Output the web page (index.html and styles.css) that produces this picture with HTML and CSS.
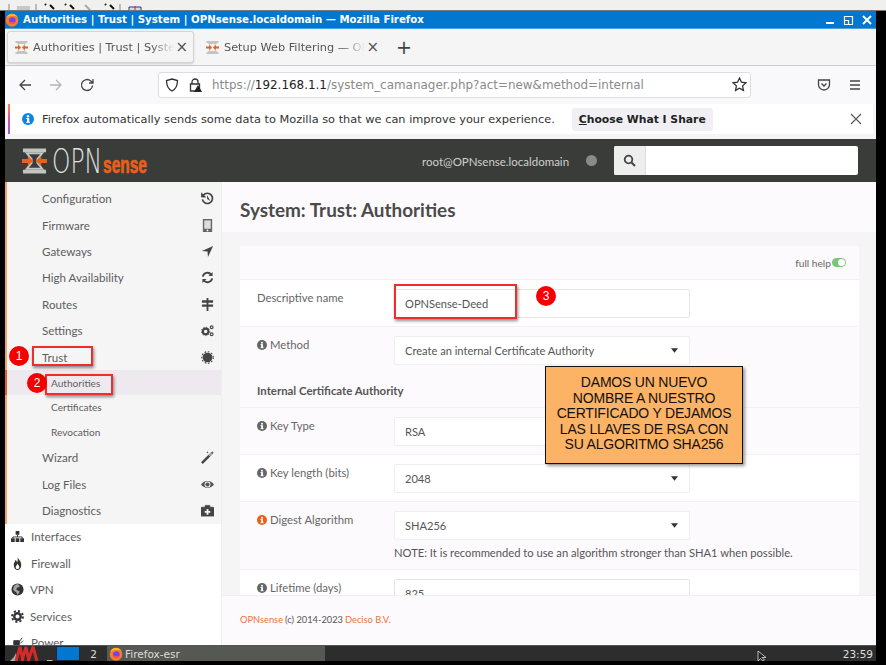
FILE: index.html
```html
<!DOCTYPE html>
<html lang="en">
<head>
    <meta charset="UTF-8">
    <meta name="viewport" content="width=device-width, initial-scale=1.0">
    <title>Authorities | Trust | System | OPNsense.localdomain</title>
    <link rel="stylesheet" href="styles.css">
</head>
<body>
    <svg class="defs" width="0" height="0">
        <symbol id="opn-mark" viewBox="0 0 26 26">
            <path d="M1 0h24v4H1zM1 22h24v4H1z" fill="#c4c4c4"/>
            <path d="M5 5h16l-5 6v4l5 6H5l5-6v-4z" fill="none" stroke="#c4c4c4" stroke-width="2"/>
            <path d="M0 11h6V8l6 5-6 5v-3H0zM26 11h-6V8l-6 5 6 5v-3h6z" fill="#e8611a"/>
        </symbol>
        <symbol id="firefox" viewBox="0 0 16 16">
            <circle cx="8" cy="8.4" r="7.2" fill="#ff7a1f"/>
            <path d="M1.2 6C2 2.6 5 .8 8 .8c3.4 0 6 2 7 5-1.5-2-3.500-2.600-5.500-2.200C6 3.200 3 4 1.200 6z" fill="#ffb61e"/>
            <circle cx="8.4" cy="8.6" r="3.8" fill="#7a3ff0"/>
            <path d="M4.6 9c.6 2.400 2.400 3.400 4.200 3.200 1.500-.2 2.800-1.200 3.200-2.800-1.600 1.400-5 1.600-7.400-.4z" fill="#ff4f5e"/>
        </symbol>
        <symbol id="info" viewBox="0 0 12 12">
            <circle cx="6" cy="6" r="6" fill="currentColor"/>
            <rect x="5" y="5" width="2.2" height="4.4" fill="#fff"/>
            <rect x="4.2" y="8.8" width="3.8" height="1" fill="#fff"/>
            <rect x="4.2" y="5" width="2" height=".9" fill="#fff"/>
            <circle cx="6" cy="3.2" r="1.2" fill="#fff"/>
        </symbol>
        <symbol id="caret" viewBox="0 0 8 5">
            <path d="M0 0h8L4 5z" fill="#333"/>
        </symbol>
    </svg>

    <div class="desktop-bar">
        <svg width="145" height="11" viewBox="0 0 145 11">
            <path d="M9 4v7M36 4v7M120 4v7" stroke="#888"/>
            <path d="M17 6h13v5H17z" fill="#c8c8c8"/>
            <path d="M45 4l1 1M50 5l4 4M65 4l1 1M70 5l4 4M105 4l1 1M110 5l4 4" stroke="#111" stroke-width="2"/>
            <path d="M85 5l5 5" stroke="#aaa" stroke-width="2"/>
            <path d="M129 7h12v4h-12z" fill="#d8d8f0" stroke="#2a3a8a"/>
            <path d="M135 6v5" stroke="#c22"/>
        </svg>
    </div>

    <div class="window">
        <div class="titlebar">
            <svg class="title-icon"><use href="#firefox"/></svg>
            <span class="title-text">Authorities | Trust | System | OPNsense.localdomain — Mozilla Firefox</span>
            <svg class="win-btns" width="46" height="12" viewBox="0 0 46 12">
                <path d="M0 8h8v2H0z" fill="#fff"/>
                <path d="M18.5 2.500h8v8h-8zM18.500 6.500h4v4" fill="none" stroke="#fff" stroke-width="1.200"/>
                <path d="M37 2l8 8M45 2l-8 8" stroke="#fff" stroke-width="2"/>
            </svg>
        </div>

        <div class="tabbar">
            <div class="tab tab-active">
                <svg class="tab-icon"><use href="#opn-mark"/></svg>
                <span class="tab-label">Authorities | Trust | System</span>
                <span class="tab-close">×</span>
            </div>
            <div class="tab">
                <svg class="tab-icon"><use href="#opn-mark"/></svg>
                <span class="tab-label">Setup Web Filtering — OPN</span>
                <span class="tab-close">×</span>
            </div>
            <span class="tab-new">+</span>
        </div>

        <div class="navbar">
            <svg class="nav-icon" viewBox="0 0 14 14"><path d="M13 7H2M7 2L2 7l5 5" fill="none" stroke="#444" stroke-width="1.3"/></svg>
            <svg class="nav-icon" viewBox="0 0 14 14"><path d="M1 7h11M7 2l5 5-5 5" fill="none" stroke="#b5b5b5" stroke-width="1.3"/></svg>
            <svg class="nav-icon" viewBox="0 0 14 14"><path d="M12.5 7.500A5.500 5.500 0 1 1 10.800 3L13 4.800M13 1v4H9" fill="none" stroke="#444" stroke-width="1.3"/></svg>
            <div class="urlbar">
                <svg class="url-icon" viewBox="0 0 14 14"><path d="M7 1l5.500 1.500c0 5-1.500 8.500-5.500 10.500C3 11 1.500 7.500 1.500 2.500z" fill="none" stroke="#333" stroke-width="1.3"/></svg>
                <svg class="url-icon" viewBox="0 0 14 14"><path d="M4 6V4a3 3 0 0 1 6 0v2M2.500 6h9v7h-9z" fill="none" stroke="#333" stroke-width="1.3"/><path d="M10 7l4 7H6z" fill="#222"/></svg>
                <span class="url-text">https://<b>192.168.1.1</b>/system_camanager.php?act=new&amp;method=internal</span>
                <svg class="url-star" viewBox="0 0 14 14"><path d="M7 1l1.800 3.900 4.200.5-3.100 2.900.8 4.200L7 10.400l-3.700 2.100.8-4.200L1 5.400l4.200-.5z" fill="none" stroke="#333" stroke-width="1.2"/></svg>
            </div>
            <svg class="nav-icon nav-pocket" viewBox="0 0 14 14"><path d="M1.500 2h11v4.500a5.500 5.500 0 0 1-11 0z" fill="none" stroke="#444" stroke-width="1.3"/><path d="M4.500 5.500L7 8l2.500-2.500" fill="none" stroke="#444" stroke-width="1.3"/></svg>
            <svg class="nav-icon nav-menu" viewBox="0 0 14 14"><path d="M2 3h10M2 7h10M2 11h10" stroke="#444" stroke-width="1.3"/></svg>
        </div>

        <div class="notice">
            <svg class="notice-icon"><use href="#info"/></svg>
            <span class="notice-text">Firefox automatically sends some data to Mozilla so that we can improve your experience.</span>
            <button class="notice-btn"><u>C</u>hoose What I Share</button>
            <svg class="notice-close" viewBox="0 0 12 12"><path d="M1 1l10 10M11 1L1 11" stroke="#555" stroke-width="1.1"/></svg>
        </div>

        <header class="opn-header">
            <svg class="opn-logo" width="130" height="28" viewBox="0 0 130 28">
                <use href="#opn-mark" x="0" y="1" width="25" height="26"/>
                <text x="30" y="26" class="logo-opn" textLength="50" lengthAdjust="spacingAndGlyphs">OPN</text>
                <text x="81" y="26" class="logo-sense" textLength="44" lengthAdjust="spacingAndGlyphs">sense</text>
            </svg>
            <span class="opn-user">root@OPNsense.localdomain</span>
            <span class="opn-dot"></span>
            <div class="opn-search">
                <span class="search-addon">
                    <svg width="13" height="13" viewBox="0 0 13 13"><circle cx="5.5" cy="5.5" r="3.8" fill="none" stroke="#444" stroke-width="1.8"/><path d="M8.500 8.500l3.500 3.500" stroke="#444" stroke-width="2"/></svg>
                </span>
            </div>
        </header>

        <div class="main">
            <nav class="sidebar">
                <div class="submenu">
                    <a class="item">Configuration
                        <svg class="item-icon" viewBox="0 0 14 14"><path d="M2.500 3.500A5.500 5.500 0 1 1 1.500 8" fill="none" stroke="#444" stroke-width="1.8"/><path d="M.5 1v4.500H5zM7 4v3.500l2.500 1.500" fill="#444" stroke="#444" stroke-width=".8"/></svg></a>
                    <a class="item">Firmware
                        <svg class="item-icon" viewBox="0 0 14 14"><path d="M2 0h10v14H2z" fill="#666"/><path d="M3.500 1.500h7v9h-7z" fill="#ddd"/><circle cx="7" cy="12.3" r=".9" fill="#fff"/></svg></a>
                    <a class="item">Gateways
                        <svg class="item-icon" viewBox="0 0 14 14"><path d="M13 1L1 6.500l6 .5.500 6z" fill="#444"/></svg></a>
                    <a class="item">High Availability
                        <svg class="item-icon" viewBox="0 0 14 14"><path d="M2 6a5 5 0 0 1 9-2M12 8a5 5 0 0 1-9 2" fill="none" stroke="#444" stroke-width="2"/><path d="M12.500 1v4.500H8zM1.500 13V8.500H6z" fill="#444"/></svg></a>
                    <a class="item">Routes
                        <svg class="item-icon" viewBox="0 0 14 14"><path d="M1 2.500h12v2.500H1zM1 7h12v2.500H1zM6 0h2v14H6z" fill="#444"/></svg></a>
                    <a class="item">Settings
                        <svg class="item-icon" viewBox="0 0 14 14"><circle cx="5" cy="8" r="3" fill="none" stroke="#444" stroke-width="2.2"/><circle cx="5" cy="8" r="4.500" fill="none" stroke="#444" stroke-dasharray="1.500 1.500"/><circle cx="11.500" cy="3.500" r="1.500" fill="none" stroke="#444" stroke-width="1.2"/><circle cx="11.500" cy="11" r="1.500" fill="none" stroke="#444" stroke-width="1.2"/></svg></a>
                    <a class="item">Trust
                        <svg class="item-icon" viewBox="0 0 14 14"><circle cx="7" cy="7" r="5.2" fill="#444"/><circle cx="7" cy="7" r="6.2" fill="none" stroke="#444" stroke-width="1.2" stroke-dasharray="1.800 1.800"/></svg></a>
                    <a class="subitem subitem-active">Authorities</a>
                    <a class="subitem">Certificates</a>
                    <a class="subitem">Revocation</a>
                    <a class="item">Wizard
                        <svg class="item-icon" viewBox="0 0 14 14"><path d="M1 13l8-8" stroke="#444" stroke-width="2.6"/><path d="M9 5l2-2" stroke="#999" stroke-width="2.6"/><path d="M12 0l.6 1.400L14 2l-1.400.6L12 4l-.6-1.400L10 2l1.400-.6zM7 0l.4 1 1 .4-1 .4-.4 1-.4-1-1-.4 1-.4z" fill="#555"/></svg></a>
                    <a class="item">Log Files
                        <svg class="item-icon" viewBox="0 0 14 14"><path d="M0 7c3.500-5 10.500-5 14 0-3.500 5-10.500 5-14 0z" fill="#555"/><circle cx="7" cy="7" r="3.2" fill="#f5f5f5"/><circle cx="7" cy="7" r="2.2" fill="#555"/></svg></a>
                    <a class="item">Diagnostics
                        <svg class="item-icon" viewBox="0 0 14 14"><path d="M1 3.500h12a1 1 0 0 1 1 1V13H0V4.500a1 1 0 0 1 1-1zM4.500 3.500V1.500h5v2" fill="#444" stroke="#444" stroke-width=".8"/><path d="M6 5.500h2V7.500h2v2H8v2H6v-2H4v-2h2z" fill="#f5f5f5"/></svg></a>
                </div>
                <a class="top-item">
                    <svg class="top-icon" viewBox="0 0 14 14"><path d="M5 1h4v4H5zM0 9h4v4H0zM5 9h4v4H5zM10 9h4v4h-4z" fill="#333"/><path d="M7 5v2.500M2 9V7.500h10V9" fill="none" stroke="#333"/></svg>
                    Interfaces</a>
                <a class="top-item">
                    <svg class="top-icon" viewBox="0 0 14 14"><path d="M7 0c1 3 4 4 4 8.500C11 12 9 14 7 14S3 12 3 8.500C3 6 4.500 5 5 3c1 1 1.500 2 1.500 3C7.500 4 7.500 2 7 0z" fill="#333"/><path d="M7 7c1 2 2 2.500 2 4s-1 2-2 2-2-.7-2-2 1.500-2 2-4z" fill="#fff"/></svg>
                    Firewall</a>
                <a class="top-item top-item-tight">
                    <svg class="top-icon" viewBox="0 0 14 14"><circle cx="7" cy="7" r="6.5" fill="#333"/><path d="M7 1c2 1 3 2 2 3S7 4 6 6s2 2 3 3-1 3-2 4c-1-2-1-3-3-4S2 6 3 4s2-2 4-3z" fill="#fff" opacity=".55"/></svg>
                    VPN</a>
                <a class="top-item top-item-tight">
                    <svg class="top-icon" viewBox="0 0 14 14"><circle cx="7" cy="7" r="3.5" fill="none" stroke="#333" stroke-width="2.6"/><circle cx="7" cy="7" r="5.9" fill="none" stroke="#333" stroke-width="2" stroke-dasharray="2.300 2.300"/></svg>
                    Services</a>
                <a class="top-item">
                    <svg class="top-icon" viewBox="0 0 14 14"><path d="M3 5h6v4a3 3 0 0 1-6 0zM9 6l3-4M10 8l3-3" fill="#333" stroke="#333"/></svg>
                    Power</a>
            </nav>

            <div class="content">
                <div class="page-title"><h1>System: Trust: Authorities</h1></div>
                <div class="scroll">
                    <section class="card">
                        <div class="card-top">
                            <span class="help-label">full help</span>
                            <span class="help-toggle"></span>
                        </div>
                        <div class="row">
                            <label class="row-label">Descriptive name</label>
                            <div class="field">OPNSense-Deed</div>
                        </div>
                        <div class="row row-tint row-method">
                            <label class="row-label"><svg class="help-icon"><use href="#info"/></svg>Method</label>
                            <div class="field field-select">Create an internal Certificate Authority<svg class="caret"><use href="#caret"/></svg></div>
                            <h2 class="row-heading">Internal Certificate Authority</h2>
                        </div>
                        <div class="row row-tint">
                            <label class="row-label"><svg class="help-icon"><use href="#info"/></svg>Key Type</label>
                            <div class="field field-select">RSA<svg class="caret"><use href="#caret"/></svg></div>
                        </div>
                        <div class="row">
                            <label class="row-label"><svg class="help-icon"><use href="#info"/></svg>Key length (bits)</label>
                            <div class="field field-select">2048<svg class="caret"><use href="#caret"/></svg></div>
                        </div>
                        <div class="row row-tint">
                            <label class="row-label"><svg class="help-icon help-icon-warn"><use href="#info"/></svg>Digest Algorithm</label>
                            <div class="field field-select">SHA256<svg class="caret"><use href="#caret"/></svg></div>
                            <p class="row-note">NOTE: It is recommended to use an algorithm stronger than SHA1 when possible.</p>
                        </div>
                        <div class="row">
                            <label class="row-label"><svg class="help-icon"><use href="#info"/></svg>Lifetime (days)</label>
                            <div class="field">825</div>
                        </div>
                    </section>
                </div>
                <footer class="page-footer"><a>OPNsense</a> (c) 2014-2023 <a>Deciso B.V.</a></footer>
            </div>
        </div>
    </div>

    <div class="taskbar">
        <svg class="task-logo" width="29" height="15" viewBox="0 0 29 15">
            <path d="M0 15l4-4 2-4 2 8z" fill="#aaa"/>
            <path d="M6 15L10 1l3 14M12 15L16 1l3 14M18 15L23 1l4 14" fill="none" stroke="#d42a2a" stroke-width="3"/>
        </svg>
        <span class="task-min">_</span>
        <span class="task-desk"></span>
        <span class="task-num">2</span>
        <div class="task-app">
            <svg class="task-app-icon"><use href="#firefox"/></svg>
            <span>Firefox-esr</span>
        </div>
        <svg class="task-cursor" width="10" height="10" viewBox="0 0 10 10"><path d="M1 0v10l2.500-2.500L6 10l1.500-1L5 6.500h4z" fill="#222" stroke="#ddd" stroke-width=".8"/></svg>
        <span class="task-clock">23:59</span>
    </div>

    <!-- markup added over the screenshot -->
    <span class="mark-box mark-box-1"></span>
    <span class="mark-box mark-box-2"></span>
    <span class="mark-box mark-box-3"></span>
    <span class="badge badge-1">1</span>
    <span class="badge badge-2">2</span>
    <span class="badge badge-3">3</span>
    <div class="callout">DAMOS UN NUEVO NOMBRE A NUESTRO CERTIFICADO Y DEJAMOS LAS LLAVES DE RSA CON SU ALGORITMO SHA256</div>
</body>
</html>
```

FILE: styles.css
```css
* {
    box-sizing: border-box;
}

body {
    position: relative;
    width: 886px;
    height: 665px;
    margin: 0;
    overflow: hidden;
    display: flex;
    flex-direction: column;
    background-color: #000;
    font-family: "Lato", "Noto Sans", sans-serif;
    color: #555;
}

.defs {
    position: absolute;
}

/* desktop strip */
.desktop-bar {
    height: 11px;
    flex: none;
    background-color: #f0f0ee;
    border-bottom: 1px solid #777;
    overflow: hidden;
}

.desktop-bar svg {
    display: block;
}

/* browser */
.window {
    flex: none;
    height: 634px;
    margin: 0 10px 0 5px;
    display: flex;
    flex-direction: column;
    background-color: #f5f5f5;
}

.titlebar {
    height: 18px;
    flex: none;
    display: flex;
    align-items: center;
    padding: 0 4px 0 0;
    background-color: #0277cf;
    color: #fff;
    font-family: "DejaVu Sans", sans-serif;
    font-size: 10.2px;
    font-weight: bold;
    border-bottom: 1px solid #4aa0e0;
}

.title-icon {
    width: 14px;
    height: 14px;
    margin-right: 4px;
}

.title-text {
    flex: 1;
}

.tabbar {
    height: 37px;
    flex: none;
    display: flex;
    align-items: center;
    padding-left: 2px;
    border-bottom: 1px solid #ccc;
    font-family: "DejaVu Sans", sans-serif;
    font-size: 11.3px;
    color: #555;
}

.tab {
    width: 187px;
    height: 32px;
    margin-right: 4px;
    display: flex;
    align-items: center;
    padding: 1px 5px 0 7px;
    border: 1px solid transparent;
    border-radius: 3px;
}

.tab-active {
    background-color: #f5f5f5;
    border-color: #d5d5d5;
    box-shadow: 0 1px 2px rgba(0, 0, 0, 0.15);
}

.tab-icon {
    width: 13px;
    height: 13px;
    flex: none;
    margin-right: 5px;
}

.tab-label {
    flex: 1;
    overflow: hidden;
    white-space: nowrap;
    -webkit-mask-image: linear-gradient(to right, #000 84%, transparent 100%);
    mask-image: linear-gradient(to right, #000 84%, transparent 100%);
}

.tab-close {
    font-size: 15px;
    line-height: 1;
    margin-left: 1px;
}

.tab-new {
    margin-left: 7px;
    font-size: 19px;
    line-height: 1;
    color: #444;
}

.navbar {
    height: 38px;
    flex: none;
    display: flex;
    align-items: center;
    padding: 0 0 1px 13px;
    background-color: #f9f9fb;
}

.nav-icon {
    width: 14px;
    height: 14px;
    flex: none;
    margin-right: 17px;
}

.urlbar {
    width: 593px;
    height: 26px;
    margin-left: 47px;
    display: flex;
    align-items: center;
    padding: 0 3px 0 6px;
    background-color: #fff;
    border: 1px solid #ddd;
    border-radius: 3px;
}

.url-icon {
    width: 14px;
    height: 14px;
    margin-right: 9px;
}

.url-text {
    flex: 1;
    margin-left: 1px;
    font-family: "DejaVu Sans", sans-serif;
    font-size: 11.95px;
    color: #8a8a8a;
    white-space: nowrap;
}

.url-text b {
    font-weight: normal;
    color: #222;
}

.url-star {
    width: 15px;
    height: 15px;
}

.nav-pocket {
    margin-left: 66px;
}

.nav-menu {
    margin-right: 0;
}

.notice {
    height: 30px;
    flex: none;
    margin: 0 3px 5px 3px;
    display: flex;
    align-items: center;
    padding-left: 12px;
    background-color: #fff;
    border-left: 2px solid #d65ad0;
    border-image: linear-gradient(to bottom, #ff8a3c, #d94fa8, #8f5cf0) 1;
    font-family: "DejaVu Sans", sans-serif;
    font-size: 11.35px;
    color: #333;
}

.notice-icon {
    width: 12px;
    height: 12px;
    margin-right: 8px;
    color: #0a84e6;
}

.notice-text {
    white-space: nowrap;
}

.notice-btn {
    width: 141px;
    height: 23px;
    margin-left: 17px;
    padding: 0;
    background-color: #f0f0f4;
    border: none;
    border-radius: 3px;
    font-family: "DejaVu Sans", sans-serif;
    font-size: 10.8px;
    font-weight: bold;
    color: #222;
}

.notice-close {
    width: 12px;
    height: 12px;
    margin-left: 137px;
}

/* opnsense page */
.opn-header {
    height: 43px;
    flex: none;
    display: flex;
    align-items: center;
    padding-left: 17px;
    background-color: #3a3c39;
}

.opn-logo {
    flex: none;
}

.logo-opn {
    font-family: "DejaVu Sans", sans-serif;
    font-size: 33px;
    font-weight: 200;
    fill: #e2e2e2;
}

.logo-sense {
    font-family: "Liberation Sans", sans-serif;
    font-size: 24px;
    font-weight: bold;
    fill: #e8611a;
    stroke: #e8611a;
    stroke-width: 0.7px;
}

.opn-user {
    width: 147px;
    margin-left: 270px;
    padding-top: 2px;
    font-size: 11.5px;
    white-space: nowrap;
    color: #cfcfcf;
}

.opn-dot {
    width: 11px;
    height: 11px;
    margin-left: 17px;
    border-radius: 50%;
    background-color: #8a8a8a;
}

.opn-search {
    width: 244px;
    height: 29px;
    margin-left: 17px;
    background-color: #fff;
    border-radius: 2px;
}

.search-addon {
    width: 32px;
    height: 29px;
    display: flex;
    align-items: center;
    justify-content: center;
    background-color: #eee;
    border-right: 1px solid #ddd;
    border-radius: 2px 0 0 2px;
}

.main {
    flex: 1;
    min-height: 0;
    display: flex;
    overflow: hidden;
}

.sidebar {
    width: 217px;
    flex: none;
    background-color: #fff;
    border-right: 1px solid #eee;
    font-size: 11.6px;
}

.submenu {
    padding-top: 3.5px;
    background-color: #f5f5f5;
    border-left: 2px solid #f7a35c;
}

.item {
    height: 26.4px;
    display: flex;
    align-items: center;
    justify-content: space-between;
    padding: 0 7px 0 35px;
    color: #5e5e5e;
}

.item-icon {
    width: 13px;
    height: 13px;
}

.subitem {
    height: 24.75px;
    display: flex;
    align-items: center;
    padding-left: 44px;
    font-size: 10.1px;
    color: #5e5e5e;
}

.subitem-active {
    margin-left: -2px;
    background-color: #eee9ee;
    border-left: 2px solid #e8611a;
}

.top-item {
    height: 26.4px;
    display: flex;
    align-items: center;
    padding-left: 6px;
    color: #5e5e5e;
}

.top-icon {
    width: 13px;
    height: 13px;
    margin-right: 7px;
}

.top-item-tight .top-icon {
    margin-right: 6px;
}

.content {
    flex: 1;
    min-width: 0;
    display: flex;
    flex-direction: column;
}

.page-title {
    height: 50px;
    flex: none;
    display: flex;
    align-items: center;
    padding: 4px 0 0 18px;
    background-color: #fdfafd;
}

.page-title h1 {
    margin: 0;
    font-size: 18.9px;
    font-weight: bold;
    color: #4a4a4a;
}

.scroll {
    flex: 1;
    min-height: 0;
    overflow: hidden;
    padding: 14px 17px 0 18px;
}

.card {
    background-color: #fff;
}

.card-top {
    height: 34px;
    display: flex;
    align-items: center;
    justify-content: flex-end;
    gap: 1px;
    padding-right: 13px;
    background-color: #fdfafd;
    border-bottom: 1px solid #f1f1f1;
}

.help-label {
    font-size: 10.2px;
    color: #666;
}

.help-toggle {
    position: relative;
    width: 14px;
    height: 9px;
    border-radius: 5px;
    background-color: #7cc576;
}

.help-toggle::after {
    content: "";
    position: absolute;
    right: 1px;
    top: 1px;
    width: 7px;
    height: 7px;
    border-radius: 50%;
    background-color: #fff;
}

.row {
    display: grid;
    grid-template-columns: 137px 296px;
    padding: 9px 17px 8px;
    border-bottom: 1px solid #f1f1f1;
}

.row-tint {
    background-color: #fdfafd;
}

.row-label {
    display: flex;
    align-items: flex-start;
    padding-top: 2px;
    font-size: 11.3px;
    color: #666;
}

.help-icon {
    width: 10px;
    height: 10px;
    flex: none;
    margin: 2px 3px 0 0;
    color: #666;
}

.help-icon-warn {
    color: #e8611a;
}

.field {
    height: 29px;
    display: flex;
    align-items: center;
    justify-content: space-between;
    padding: 0 11px 1px 10px;
    background-color: #fff;
    border: 1px solid #e4e4e4;
    border-radius: 2px;
    font-size: 11.1px;
    color: #555;
}

.field-select {
    border-color: #efefef;
}

.caret {
    width: 7px;
    height: 5px;
}

.row-heading {
    grid-column: 1 / -1;
    margin: 19px 0 9px;
    font-size: 11.4px;
    line-height: 14px;
    font-weight: bold;
    color: #555;
}

.row-method {
    padding-bottom: 0;
}

.row-note {
    grid-column: 2;
    margin: 6px 0 1px;
    font-size: 11.2px;
    line-height: 14px;
    white-space: nowrap;
    color: #555;
}

.page-footer {
    height: 50px;
    flex: none;
    display: flex;
    align-items: center;
    gap: 2px;
    padding: 0 0 2px 18px;
    background-color: #fdfafd;
    border-top: 1px solid #eee;
    font-size: 9.3px;
    color: #555;
}

.page-footer a {
    color: #e8743a;
}

/* panel */
.taskbar {
    position: relative;
    height: 16px;
    flex: none;
    margin-left: 5px;
    margin-right: 10px;
    display: flex;
    align-items: center;
    background-color: #2d2d2d;
    border-top: 1px solid #555;
    color: #ddd;
    font-family: "DejaVu Sans", sans-serif;
    font-size: 10.5px;
}

.task-logo {
    margin-left: 5px;
    flex: none;
}

.task-min {
    margin: 0 5px 0 8px;
    width: 4px;
}

.task-desk {
    width: 24px;
    height: 15px;
    background-color: #0277cf;
    border: 1px solid #1a2a3a;
}

.task-num {
    width: 27px;
    text-align: center;
}

.task-app {
    width: 218px;
    height: 15px;
    display: flex;
    align-items: center;
    padding-left: 2px;
    background-color: #555853;
}

.task-app-icon {
    width: 14px;
    height: 14px;
    margin-right: 2px;
}

.task-cursor {
    position: absolute;
    left: 752px;
    top: 5px;
}

.task-clock {
    margin-left: auto;
    padding-right: 3px;
}

/* annotations */
.mark-box {
    position: absolute;
    border: 2px solid #ee2d2d;
    box-shadow: 1px 2px 3px rgba(0, 0, 0, 0.45);
}

.mark-box-1 {
    left: 32px;
    top: 346px;
    width: 61px;
    height: 20px;
}

.mark-box-2 {
    left: 45px;
    top: 374px;
    width: 68px;
    height: 21px;
}

.mark-box-3 {
    left: 394px;
    top: 284px;
    width: 123px;
    height: 35px;
}

.badge {
    position: absolute;
    width: 20px;
    height: 20px;
    display: flex;
    align-items: center;
    justify-content: center;
    border-radius: 50%;
    background-color: #f40000;
    color: #fff;
    font-family: "Liberation Sans", sans-serif;
    font-size: 12px;
}

.badge-1 {
    left: 9px;
    top: 346px;
}

.badge-2 {
    left: 27px;
    top: 373px;
}

.badge-3 {
    left: 536px;
    top: 286px;
}

.callout {
    position: absolute;
    left: 545px;
    top: 366px;
    width: 198px;
    height: 98px;
    display: flex;
    align-items: center;
    justify-content: center;
    padding: 0 6px 2px;
    background-color: #fdb366;
    border: 1px solid #111;
    box-shadow: 2px 2px 3px rgba(0, 0, 0, 0.4);
    font-family: "Liberation Sans", sans-serif;
    font-size: 14px;
    letter-spacing: -0.2px;
    line-height: 15.4px;
    text-align: center;
    color: #111;
}
```
